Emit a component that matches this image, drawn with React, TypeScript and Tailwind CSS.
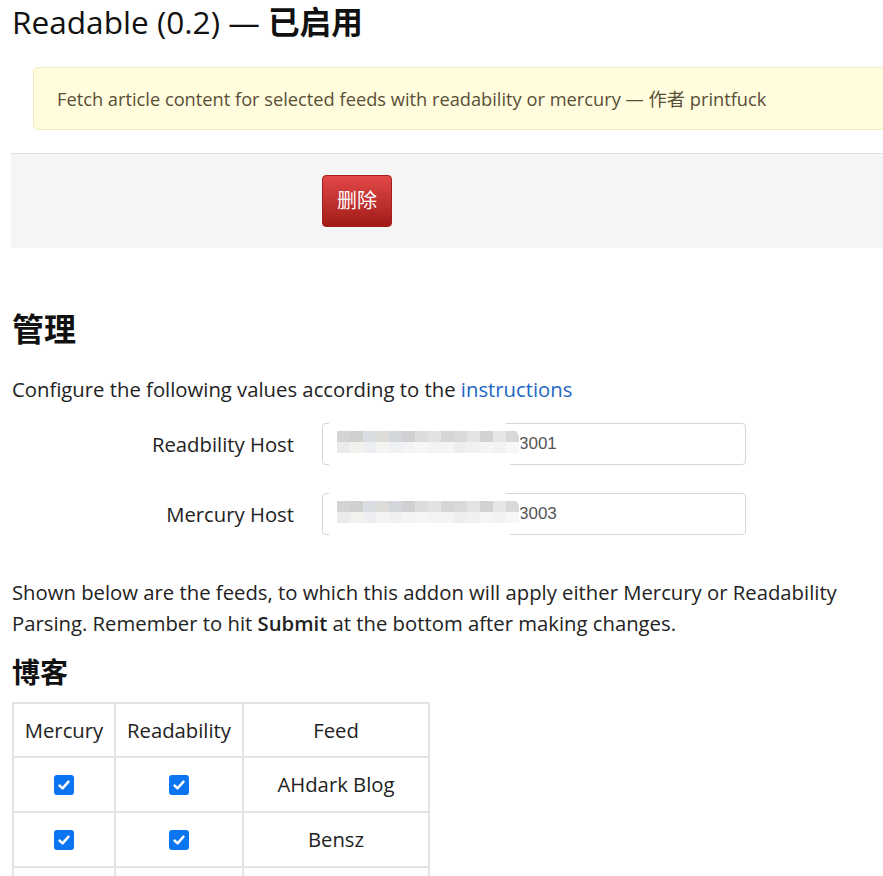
import React from "react";

const font = { fontFamily: '"Open Sans", "Noto Sans CJK SC", sans-serif' };

function Check() {
  return (
    <span className="inline-flex h-[20px] w-[20px] items-center justify-center rounded-[3px] bg-[#0b74f0]">
      <svg width="14" height="14" viewBox="0 0 14 14">
        <path d="M2.5 7.5 L5.6 10.4 L11.5 3.6" fill="none" stroke="#fff" strokeWidth="2.4" strokeLinecap="round" strokeLinejoin="round" />
      </svg>
    </span>
  );
}

function Mosaic() {
  const top = ["#d4d4d4", "#cfcfcf", "#d9dde2", "#dddbd8", "#d3d6da", "#d0d0d2", "#dadcde", "#e2e2e2", "#d6d6d8", "#d9d9db", "#e4e4e4", "#d2d2d2", "#e6e6e6", "#d8d8d8"];
  const bot = ["#ebebeb", "#f3f1ee", "#eceef1", "#f5f4f2", "#eef0f2", "#f3f4f5", "#f6f6f6", "#f2f3f4", "#f4f4f4", "#eeeeee", "#f0f0f0", "#f5f5f5", "#f2f2f2", "#f7f7f7"];
  return (
    <div className="pointer-events-none absolute left-[6px] top-[-2px] h-[46px] w-[192px] overflow-hidden rounded-r-[40px] bg-white">
      <div className="absolute left-[8px] top-[9px] flex blur-[0.6px]">
        {top.map((c, i) => (
          <div key={i} className="h-[11px] w-[13px]" style={{ background: c }} />
        ))}
      </div>
      <div className="absolute left-[8px] top-[20px] flex blur-[0.6px]">
        {bot.map((c, i) => (
          <div key={i} className="h-[11px] w-[13px]" style={{ background: c }} />
        ))}
      </div>
    </div>
  );
}

function HostRow({ label, value }: { label: string; value: string }) {
  return (
    <div className="flex items-center">
      <div className="w-[294px] text-right text-[20.3px] text-[#222]">{label}</div>
      <div className="relative ml-[28px] flex h-[42px] w-[424px] items-center rounded-[4px] border border-[#d6d6d6] bg-white">
        <span
          className="ml-[196px] text-[17px] text-[#555]"
          style={{ fontFamily: '"Liberation Sans", Arial, sans-serif' }}
        >
          {value}
        </span>
        <Mosaic />
      </div>
    </div>
  );
}

export default function App() {
  const rows = ["AHdark Blog", "Bensz", ""];
  return (
    <div className="h-[876px] w-[883px] overflow-hidden bg-white text-[#222]" style={font}>
      <h1 className="ml-[12px] pt-[3px] text-[31.6px] leading-[38px] text-[#111]">
        Readable (0.2) — <span className="font-bold">已启用</span>
      </h1>

      <div className="ml-[33px] mt-[26px] flex h-[63px] w-[900px] items-center rounded-[5px] border border-[#efecc4] bg-[#fffddd] pl-[23px] text-[18.25px] text-[#5a4e37]">
        Fetch article content for selected feeds with readability or mercury — 作者 printfuck
      </div>

      <div className="ml-[11px] mt-[23px] flex h-[95px] w-[900px] items-center border-t border-[#dfdfdf] bg-[#f5f5f5] pl-[311px]">
        <button className="flex h-[52px] w-[70px] items-center justify-center rounded-[4px] border border-[#a51d1d] bg-gradient-to-b from-[#e34848] to-[#a01a16] text-[20px] text-white">
          删除
        </button>
      </div>

      <h2 className="ml-[12px] mt-[61px] text-[32px] font-bold leading-[40px] text-[#111]">管理</h2>

      <p className="ml-[12px] mt-[25px] text-[20.3px] leading-[30px]">
        Configure the following values according to the{" "}
        <span className="text-[#2267c4]">instructions</span>
      </p>

      <div className="mt-[19px] flex flex-col gap-[28px]">
        <HostRow label="Readbility Host" value="3001" />
        <HostRow label="Mercury Host" value="3003" />
      </div>

      <p className="ml-[12px] mt-[42px] w-[860px] text-[20.3px] leading-[31px]">
        Shown below are the feeds, to which this addon will apply either Mercury or Readability Parsing. Remember to hit{" "}
        <b className="font-semibold">Submit</b> at the bottom after making changes.
      </p>

      <h3 className="ml-[12px] mt-[16px] text-[28px] font-bold leading-[34px] text-[#111]">博客</h3>

      <table className="ml-[12px] mt-[13px] border-collapse text-[20.3px]">
        <thead>
          <tr className="h-[54px]">
            <th className="w-[102px] border-2 border-[#e4e4e4] font-normal">Mercury</th>
            <th className="w-[128px] border-2 border-[#e4e4e4] font-normal">Readability</th>
            <th className="w-[186px] border-2 border-[#e4e4e4] font-normal">Feed</th>
          </tr>
        </thead>
        <tbody>
          {rows.map((r, i) => (
            <tr key={i} className="h-[55px]">
              <td className="border-2 border-[#e4e4e4] text-center">
                {r && (
                  <div className="flex justify-center pt-[1px]">
                    <Check />
                  </div>
                )}
              </td>
              <td className="border-2 border-[#e4e4e4] text-center">
                {r && (
                  <div className="flex justify-center pt-[1px]">
                    <Check />
                  </div>
                )}
              </td>
              <td className="border-2 border-[#e4e4e4] text-center">{r}</td>
            </tr>
          ))}
        </tbody>
      </table>
    </div>
  );
}
